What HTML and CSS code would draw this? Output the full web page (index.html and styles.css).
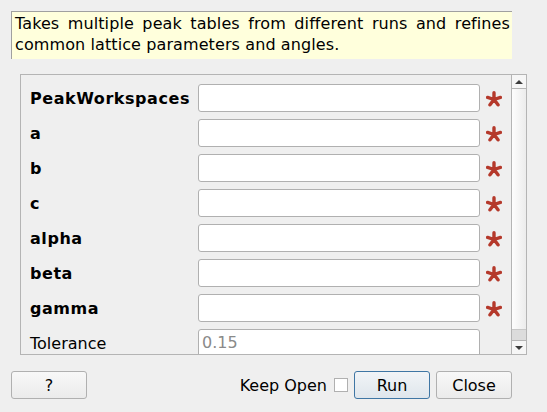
FILE: index.html
```html
<!DOCTYPE html>
<html>
<head>
<meta charset="utf-8">
<link rel="stylesheet" href="styles.css">
</head>
<body>
<div class="dialog">
  <div class="desc">Takes multiple peak tables from different runs and refines common lattice parameters and angles.</div>
  <div class="scroll">
    <div class="props">
      <div class="label bold">PeakWorkspaces</div><div class="field"></div><svg class="star" viewBox="0 0 16 16"><path d="M8 1.8V8.5M14.4 6.4L8 8.5M12 13.8L8 8.5M4 13.8L8 8.5M1.6 6.4L8 8.5"/></svg>
      <div class="label bold">a</div><div class="field"></div><svg class="star" viewBox="0 0 16 16"><path d="M8 1.8V8.5M14.4 6.4L8 8.5M12 13.8L8 8.5M4 13.8L8 8.5M1.6 6.4L8 8.5"/></svg>
      <div class="label bold">b</div><div class="field"></div><svg class="star" viewBox="0 0 16 16"><path d="M8 1.8V8.5M14.4 6.4L8 8.5M12 13.8L8 8.5M4 13.8L8 8.5M1.6 6.4L8 8.5"/></svg>
      <div class="label bold">c</div><div class="field"></div><svg class="star" viewBox="0 0 16 16"><path d="M8 1.8V8.5M14.4 6.4L8 8.5M12 13.8L8 8.5M4 13.8L8 8.5M1.6 6.4L8 8.5"/></svg>
      <div class="label bold">alpha</div><div class="field"></div><svg class="star" viewBox="0 0 16 16"><path d="M8 1.8V8.5M14.4 6.4L8 8.5M12 13.8L8 8.5M4 13.8L8 8.5M1.6 6.4L8 8.5"/></svg>
      <div class="label bold">beta</div><div class="field"></div><svg class="star" viewBox="0 0 16 16"><path d="M8 1.8V8.5M14.4 6.4L8 8.5M12 13.8L8 8.5M4 13.8L8 8.5M1.6 6.4L8 8.5"/></svg>
      <div class="label bold">gamma</div><div class="field"></div><svg class="star" viewBox="0 0 16 16"><path d="M8 1.8V8.5M14.4 6.4L8 8.5M12 13.8L8 8.5M4 13.8L8 8.5M1.6 6.4L8 8.5"/></svg>
      <div class="label">Tolerance</div><div class="field placeholder">0.15</div><div></div>
    </div>
    <div class="sbar">
      <div class="sbtn up"><span class="arrow-up"></span></div>
      <div class="handle"></div>
      <div class="trough"></div>
      <div class="sbtn down"><span class="arrow-down"></span></div>
    </div>
  </div>
  <div class="buttons">
    <button class="btn">?</button>
    <div class="spacer"></div>
    <span class="keep">Keep Open</span>
    <span class="check"></span>
    <button class="btn default">Run</button>
    <button class="btn">Close</button>
  </div>
</div>
</body>
</html>
```
FILE: styles.css
```css
html, body {
  margin: 0;
  padding: 0;
  background: #efefef;
}
body {
  font-family: "DejaVu Sans", sans-serif;
  font-size: 16px;
  color: #000;
  width: 547px;
  height: 412px;
  overflow: hidden;
}
.dialog {
  display: flex;
  flex-direction: column;
  padding: 11px 35px 0 11px;
}
.desc {
  background: #ffffdc;
  border-top: 1px solid #a0a0a0;
  border-left: 1px solid #a0a0a0;
  padding: 1px 2px 4px 3px;
  line-height: 21px;
  letter-spacing: 0.1px;
  text-align: justify;
  height: 42px;
}
.scroll {
  margin: 15px -15px 0 9px;
  height: 279px;
  border: 1px solid #b4b4b4;
  display: flex;
  overflow: hidden;
}
.props {
  flex: 1;
  display: grid;
  grid-template-columns: 161px 283px 16px;
  grid-auto-rows: 28px;
  column-gap: 6px;
  row-gap: 7px;
  align-items: center;
  padding: 9px 8px 0 9px;
  align-content: start;
}
.label {
  white-space: nowrap;
}
.bold {
  font-weight: bold;
  letter-spacing: 0.55px;
}
.field {
  height: 26px;
  background: #fff;
  border: 1px solid #b0b0b0;
  border-radius: 3px;
  line-height: 26px;
  padding-left: 3px;
  margin-left: 1px;
}
.placeholder {
  color: #8a8a8a;
}
.star {
  width: 16px;
  height: 16px;
  margin-top: 2px;
}
.star path {
  stroke: #b5392b;
  stroke-width: 3.4;
  stroke-linecap: round;
  fill: none;
}
.sbar {
  width: 14px;
  border-left: 1px solid #b4b4b4;
  display: flex;
  flex-direction: column;
  background: #e2e2e2;
}
.sbtn {
  height: 13px;
  background: #f6f6f6;
  display: flex;
  align-items: center;
  justify-content: center;
}
.sbtn.up {
  border-bottom: 1px solid #b4b4b4;
}
.sbtn.down {
  border-top: 1px solid #b4b4b4;
}
.handle {
  height: 240px;
  background: linear-gradient(to right, #fdfdfd, #ececec);
  border-bottom: 1px solid #c8c8c8;
}
.trough {
  flex: 1;
  background: #dcdcdc;
}
.arrow-up {
  width: 0;
  height: 0;
  border-left: 4px solid transparent;
  border-right: 4px solid transparent;
  border-bottom: 4px solid #3c3c3c;
}
.arrow-down {
  width: 0;
  height: 0;
  border-left: 4px solid transparent;
  border-right: 4px solid transparent;
  border-top: 4px solid #3c3c3c;
}
.buttons {
  display: flex;
  align-items: center;
  margin-top: 16px;
  height: 28px;
}
.spacer {
  flex: 1;
}
.btn {
  width: 76px;
  height: 28px;
  font-family: "DejaVu Sans", sans-serif;
  font-size: 16px;
  color: #000;
  border: 1px solid #b0b0b0;
  border-radius: 3px;
  background: linear-gradient(#f8f8f8, #ebebeb);
  padding: 0;
  margin: 0;
}
.btn.default {
  border-color: #3f76a4;
  background: linear-gradient(#f1f4f7, #dfe6ec);
  margin-right: 6px;
}
.keep {
  margin-right: 7px;
}
.check {
  width: 12px;
  height: 12px;
  border: 1px solid #b0b0b0;
  background: #fff;
  margin-right: 6px;
}
```
